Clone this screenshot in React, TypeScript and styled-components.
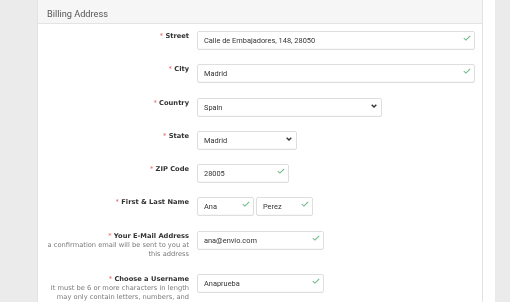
import { createGlobalStyle, styled } from 'styled-components'

interface FieldType {
  value: string
  width: number
  valid?: boolean
}

interface RowType {
  label: string
  help?: string[]
  children: React.ReactNode
}

const GlobalStyle = createGlobalStyle`
  html, body {
    margin: 0;
    padding: 0;
    background: #ebebeb;
  }
`

function Check() {
  return (
    <CheckIcon width="8" height="6" viewBox="0 0 8 6">
      <polyline points="0.8,3.2 2.9,5.1 7.2,0.8" fill="none" stroke="#6dbb8a" strokeWidth="1.1" />
    </CheckIcon>
  )
}

function Field({ value, width, valid = true }: FieldType) {
  return (
    <FieldWrap $width={width}>
      <TextInput readOnly value={value} />
      {valid && <Check />}
    </FieldWrap>
  )
}

function Select({ value, width }: FieldType) {
  return (
    <FieldWrap $width={width}>
      <SelectBox value={value} onChange={() => {}}>
        <option>{value}</option>
      </SelectBox>
      <Chevron width="6" height="4" viewBox="0 0 6 4">
        <polyline points="0.7,0.7 3,3 5.3,0.7" fill="none" stroke="#333" strokeWidth="1.4" />
      </Chevron>
    </FieldWrap>
  )
}

function Row({ label, help, children }: RowType) {
  return (
    <FormRow>
      <LabelCol>
        <Label>
          <Req>*</Req> {label}
        </Label>
        {help && help.map((line) => <Help key={line}>{line}</Help>)}
      </LabelCol>
      <Controls>{children}</Controls>
    </FormRow>
  )
}

function App() {
  return (
    <>
      <GlobalStyle />
      <Page>
        <Gutter />
        <Main>
          <Panel>
            <Heading>
              <HeadingText>Billing Address</HeadingText>
            </Heading>
            <Body>
              <Row label="Street">
                <Field value="Calle de Embajadores, 148, 28050" width={278} />
              </Row>
              <Row label="City">
                <Field value="Madrid" width={278} />
              </Row>
              <Row label="Country">
                <Select value="Spain" width={185} />
              </Row>
              <Row label="State">
                <Select value="Madrid" width={100} />
              </Row>
              <Row label="ZIP Code">
                <Field value="28005" width={92} />
              </Row>
              <Row label="First & Last Name">
                <Field value="Ana" width={57} />
                <Field value="Perez" width={57} />
              </Row>
              <Row
                label="Your E-Mail Address"
                help={['a confirmation email will be sent to you at', 'this address']}
              >
                <Field value="ana@envio.com" width={127} />
              </Row>
              <Row
                label="Choose a Username"
                help={['It must be 6 or more characters in length', 'may only contain letters, numbers, and']}
              >
                <Field value="Anaprueba" width={127} />
              </Row>
            </Body>
          </Panel>
        </Main>
      </Page>
    </>
  )
}

const Page = styled.div`
  display: flex;
  height: 302px;
  overflow: hidden;
`

const Gutter = styled.div`
  width: 37px;
  flex-shrink: 0;
`

const Main = styled.div`
  width: 458px;
  flex-shrink: 0;
  box-sizing: border-box;
  padding-right: 12px;
  background: #fff;
`

const Panel = styled.div`
  border: 1px solid #e3e3e3;
  border-top: none;
  min-height: 100%;
  box-sizing: border-box;
`

const Heading = styled.div`
  height: 24px;
  box-sizing: border-box;
  padding: 8px 0 0 9px;
  background: #f6f6f6;
  border-bottom: 1px solid #e3e3e3;
`

const HeadingText = styled.div`
  font-family: Roboto, 'Liberation Sans', sans-serif;
  font-size: 9.2px;
  color: #555;
  will-change: transform;
`

const Body = styled.div`
  padding-top: 5px;
`

const FormRow = styled.div`
  display: flex;
  align-items: flex-start;
  margin-bottom: 14.3px;
`

const LabelCol = styled.div`
  width: 151px;
  flex-shrink: 0;
  padding-top: 2px;
  text-align: right;
  font-family: Verdana, 'DejaVu Sans', sans-serif;
  will-change: transform;
`

const Label = styled.div`
  font-size: 6.7px;
  line-height: 10px;
  font-weight: bold;
  color: #333;
`

const Req = styled.span`
  color: #e0575a;
  font-weight: normal;
`

const Help = styled.div`
  font-size: 6.7px;
  line-height: 8.5px;
  color: #7a7a7a;
`

const Controls = styled.div`
  display: flex;
  gap: 2px;
  margin-left: 8px;
`

const FieldWrap = styled.div<{ $width: number }>`
  position: relative;
  width: ${(p) => p.$width}px;
  height: 19px;
  border-radius: 2px;
  box-shadow: 0 1px 1px rgba(0, 0, 0, 0.03);
  will-change: transform;
`

const TextInput = styled.input`
  width: 100%;
  height: 100%;
  box-sizing: border-box;
  margin: 0;
  padding: 0 6px;
  border: 1px solid #dedede;
  border-radius: 2px;
  background: transparent;
  font-family: Roboto, 'Liberation Sans', sans-serif;
  font-size: 7.4px;
  color: #333;
  outline: none;
`

const SelectBox = styled.select`
  appearance: none;
  width: 100%;
  height: 100%;
  box-sizing: border-box;
  margin: 0;
  padding: 0 6px;
  border: 1px solid #dedede;
  border-radius: 2px;
  background: transparent;
  font-family: Roboto, 'Liberation Sans', sans-serif;
  font-size: 7.4px;
  color: #333;
  outline: none;
`

const CheckIcon = styled.svg`
  position: absolute;
  right: 4px;
  top: 6px;
`

const Chevron = styled.svg`
  position: absolute;
  right: 5px;
  top: 8px;
  pointer-events: none;
`

export default App
